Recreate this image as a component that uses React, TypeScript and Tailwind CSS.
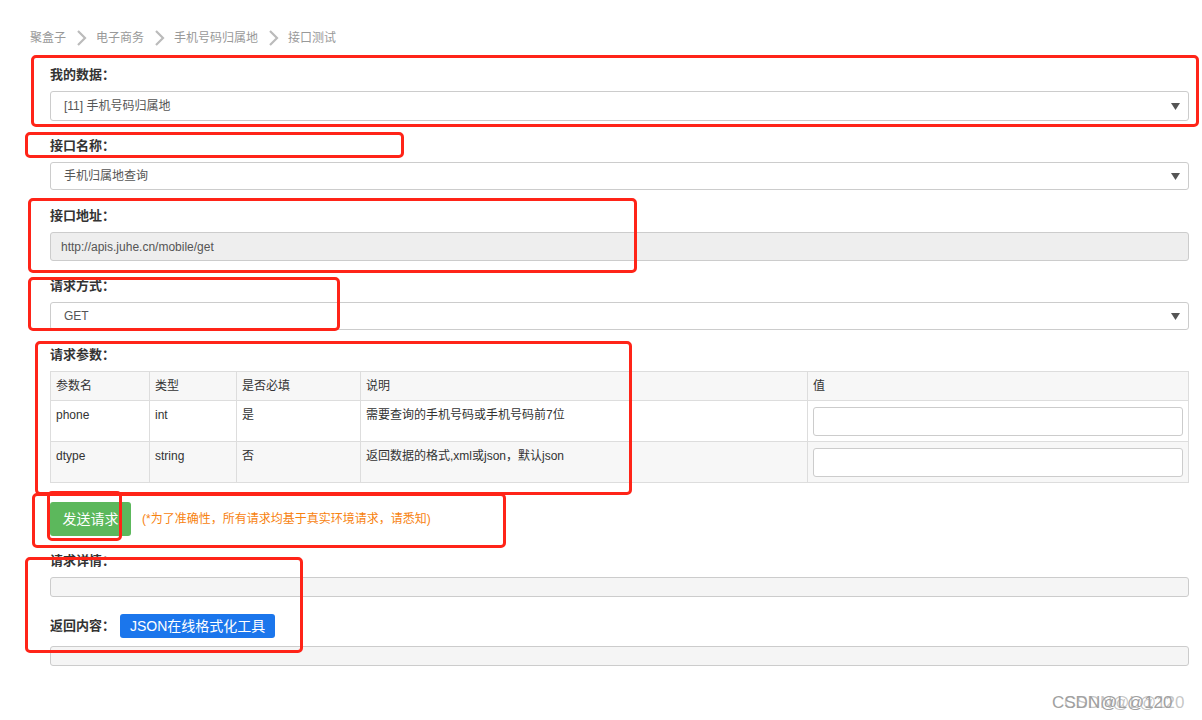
const font = { fontFamily: '"Liberation Sans", Arial, "Noto Sans CJK SC", sans-serif' };

function Chevron() {
  return (
    <svg width="12" height="18" viewBox="0 0 12 18" className="shrink-0">
      <path d="M3 2l7 7-7 7" fill="none" stroke="#bbb" strokeWidth="2.2" />
    </svg>
  );
}

function Caret() {
  return (
    <svg width="9" height="7" viewBox="0 0 9 7" className="shrink-0">
      <path d="M0 0h9L4.5 7z" fill="#555" />
    </svg>
  );
}

function Label({ children }: { children: React.ReactNode }) {
  return <div className="h-5 leading-5 text-[13px] font-bold text-[#333]">{children}</div>;
}

function Select({ value, h }: { value: string; h: string }) {
  return (
    <div className={`mt-[6px] ${h} flex items-center justify-between rounded-[3px] border border-[#ccc] bg-white pl-[13px] pr-[8px] text-[12px] text-[#555]`}>
      <span>{value}</span>
      <Caret />
    </div>
  );
}

const params = [
  { name: "phone", type: "int", req: "是", desc: "需要查询的手机号码或手机号码前7位" },
  { name: "dtype", type: "string", req: "否", desc: "返回数据的格式,xml或json，默认json" },
];

function RedBox({ className }: { className: string }) {
  return <div className={`absolute rounded-[5px] border-[3px] border-[#ff2418] ${className}`} />;
}

export default function App() {
  return (
    <div className="relative w-[1202px] h-[720px] overflow-hidden bg-white" style={font}>
      {/* breadcrumb */}
      <div className="pt-[28px] pl-[30px] h-[47px] flex items-center gap-[9px] text-[12px] text-[#999]">
        <span>聚盒子</span>
        <Chevron />
        <span>电子商务</span>
        <Chevron />
        <span>手机号码归属地</span>
        <Chevron />
        <span>接口测试</span>
      </div>

      <div className="pl-[50px] pr-[13px]">
        <div className="mt-[18px]">
          <Label>我的数据：</Label>
          <Select value="[11] 手机号码归属地" h="h-[30px]" />
        </div>
        <div className="mt-[15px]">
          <Label>接口名称：</Label>
          <Select value="手机归属地查询" h="h-[28px]" />
        </div>
        <div className="mt-[16px]">
          <Label>接口地址：</Label>
          <div className="mt-[6px] h-[29px] flex items-center rounded-[3px] border border-[#ccc] bg-[#eee] pl-[10px] text-[12px] text-[#555]">
            http://apis.juhe.cn/mobile/get
          </div>
        </div>
        <div className="mt-[15px]">
          <Label>请求方式：</Label>
          <Select value="GET" h="h-[28px]" />
        </div>
        <div className="mt-[15px]">
          <Label>请求参数：</Label>
          <table className="mt-[6px] w-full border-collapse text-[12px] text-[#333]">
            <colgroup>
              <col className="w-[99px]" />
              <col className="w-[87px]" />
              <col className="w-[124px]" />
              <col className="w-[447px]" />
              <col />
            </colgroup>
            <thead>
              <tr className="h-[29px] bg-[#f7f7f7]">
                {["参数名", "类型", "是否必填", "说明", "值"].map((h) => (
                  <td key={h} className="border border-[#ddd] px-[5px] text-left font-normal">
                    {h}
                  </td>
                ))}
              </tr>
            </thead>
            <tbody>
              {params.map((p, i) => (
                <tr key={p.name} className={`h-[41px] ${i % 2 ? "bg-[#f7f7f7]" : "bg-white"}`}>
                  <td className="border border-[#ddd] px-[5px] pt-[5px] align-top">{p.name}</td>
                  <td className="border border-[#ddd] px-[5px] pt-[5px] align-top">{p.type}</td>
                  <td className="border border-[#ddd] px-[5px] pt-[5px] align-top">{p.req}</td>
                  <td className="border border-[#ddd] px-[5px] pt-[5px] align-top">{p.desc}</td>
                  <td className="border border-[#ddd] px-[5px] py-[5px]">
                    <div className="h-[29px] rounded-[3px] border border-[#ccc] bg-white" />
                  </td>
                </tr>
              ))}
            </tbody>
          </table>
        </div>

        <div className="mt-[19px] flex items-center gap-[11px]">
          <button className="h-[34px] w-[81px] rounded-[3px] bg-[#5cb85c] text-[14px] text-white">发送请求</button>
          <span className="text-[12px] text-[#f7820f]">(*为了准确性，所有请求均基于真实环境请求，请悉知)</span>
        </div>

        <div className="mt-[15px]">
          <Label>请求详情：</Label>
          <div className="mt-[6px] h-[20px] rounded-[3px] border border-[#ccc] bg-[#f5f5f5]" />
        </div>

        <div className="mt-[17px] flex items-center gap-[5px]">
          <span className="text-[13px] font-bold text-[#333]">返回内容：</span>
          <span className="h-[24px] leading-[24px] rounded-[3px] bg-[#1b76ec] px-[10px] text-[14px] text-white">JSON在线格式化工具</span>
        </div>
        <div className="mt-[8px] h-[20px] rounded-[3px] border border-[#ccc] bg-[#f5f5f5]" />
      </div>

      {/* watermark */}
      <div className="absolute left-[1052px] top-[690px] text-[17px] text-[#a0a0a0] [text-shadow:12px_0_0_rgba(160,160,160,0.6)]">
        CSDN@L@120
      </div>

      {/* annotation boxes */}
      <RedBox className="left-[31px] top-[55px] w-[1168px] h-[72px]" />
      <RedBox className="left-[25px] top-[132px] w-[379px] h-[26px]" />
      <RedBox className="left-[28px] top-[198px] w-[609px] h-[75px]" />
      <RedBox className="left-[28px] top-[277px] w-[312px] h-[54px]" />
      <RedBox className="left-[35px] top-[341px] w-[597px] h-[154px]" />
      <RedBox className="left-[32px] top-[493px] w-[474px] h-[55px]" />
      <RedBox className="left-[47px] top-[491px] w-[75px] h-[50px]" />
      <RedBox className="left-[25px] top-[557px] w-[278px] h-[96px]" />
    </div>
  );
}
